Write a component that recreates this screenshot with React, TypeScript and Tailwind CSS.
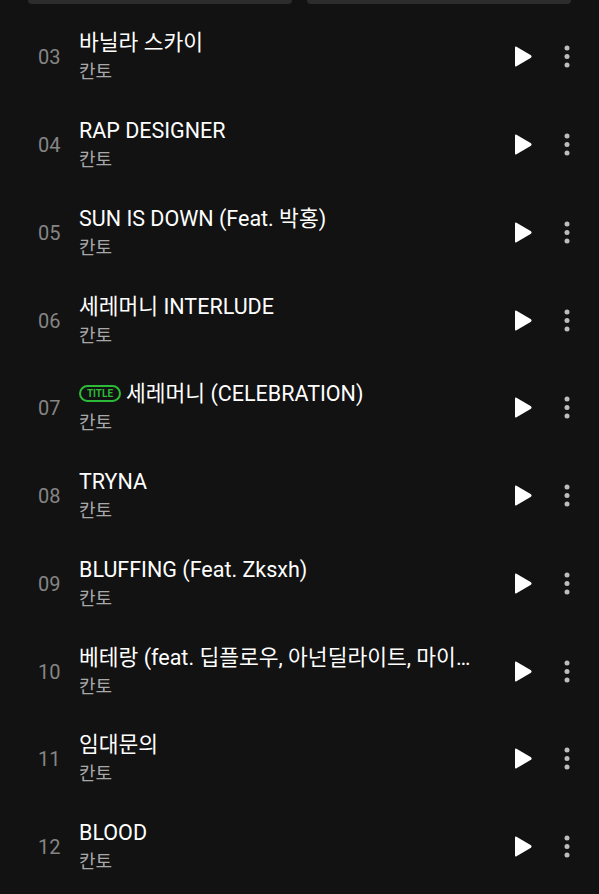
import React from 'react';

interface Track {
  no: string;
  title: string;
  artist: string;
  isTitle?: boolean;
}

const tracks: Track[] = [
  { no: '03', title: '바닐라 스카이', artist: '칸토' },
  { no: '04', title: 'RAP DESIGNER', artist: '칸토' },
  { no: '05', title: 'SUN IS DOWN (Feat. 박홍)', artist: '칸토' },
  { no: '06', title: '세레머니 INTERLUDE', artist: '칸토' },
  { no: '07', title: '세레머니 (CELEBRATION)', artist: '칸토', isTitle: true },
  { no: '08', title: 'TRYNA', artist: '칸토' },
  { no: '09', title: 'BLUFFING (Feat. Zksxh)', artist: '칸토' },
  { no: '10', title: '베테랑 (feat. 딥플로우, 아넌딜라이트, 마이노스)', artist: '칸토' },
  { no: '11', title: '임대문의', artist: '칸토' },
  { no: '12', title: 'BLOOD', artist: '칸토' },
];

const PlayIcon = () => (
  <svg width="19" height="23" viewBox="0 0 19 23" className="block">
    <path d="M1 2.6 Q1 1 2.5 1.8 L17 10.2 Q18.3 11.5 17 12.8 L2.5 21.2 Q1 22 1 20.4 Z" fill="#ffffff" />
  </svg>
);

const MoreIcon = () => (
  <svg width="8" height="23" viewBox="0 0 8 23" className="block">
    <circle cx="4" cy="3" r="2.5" fill="#bdbdbd" />
    <circle cx="4" cy="11.5" r="2.5" fill="#bdbdbd" />
    <circle cx="4" cy="20" r="2.5" fill="#bdbdbd" />
  </svg>
);

const TrackRow: React.FC<{ track: Track }> = ({ track }) => (
  <div className="flex h-[87.75px] items-center">
    <div className="w-[79px] shrink-0 pl-[38px] pt-[1px] text-[20px] text-[#858585]">{track.no}</div>
    <div className="min-w-0 flex-1">
      <div className="flex items-center text-[21.5px] leading-[27px] text-white">
        {track.isTitle && (
          <span className="mr-[5px] flex h-[17px] w-[42px] shrink-0 items-center justify-center rounded-full border-2 border-[#2cbb38] text-[10px] font-bold leading-none text-[#2cbb38]">
            TITLE
          </span>
        )}
        <span className="truncate pr-[2px]">{track.title}</span>
      </div>
      <div className="mt-[4px] text-[18px] leading-[24px] text-[#a8a8a8]">{track.artist}</div>
    </div>
    <div className="ml-[33px] flex w-[19px] shrink-0 justify-center">
      <PlayIcon />
    </div>
    <div className="ml-[30px] mr-[28px] flex w-[8px] shrink-0 justify-center">
      <MoreIcon />
    </div>
  </div>
);

export default function App() {
  return (
    <div
      className="h-[894px] w-[599px] overflow-hidden bg-[#121212]"
      style={{ fontFamily: 'Roboto, "Noto Sans CJK KR", sans-serif' }}
    >
      <div className="flex gap-[15px] px-[28px]">
        <div className="h-[4px] flex-1 rounded-b-[6px] bg-[#2c2c2c]" />
        <div className="h-[4px] flex-1 rounded-b-[6px] bg-[#2c2c2c]" />
      </div>
      <div className="pt-[9px]">
        {tracks.map((t) => (
          <TrackRow key={t.no} track={t} />
        ))}
      </div>
    </div>
  );
}
